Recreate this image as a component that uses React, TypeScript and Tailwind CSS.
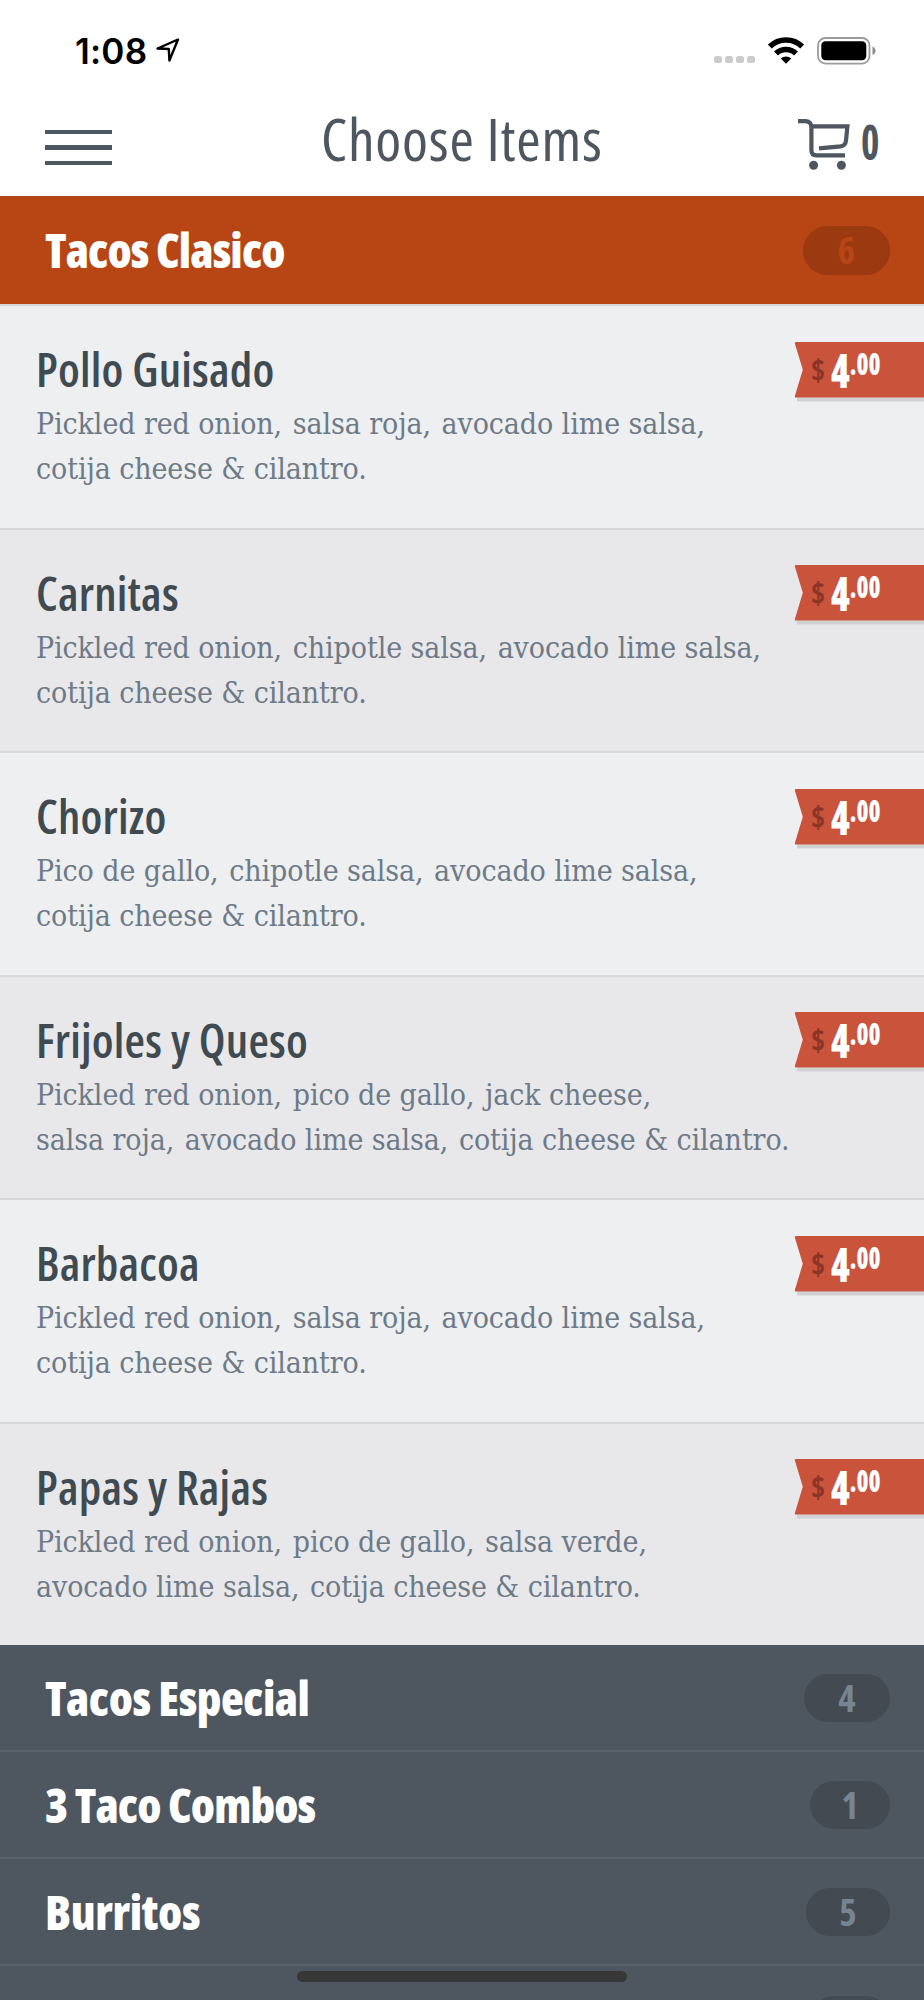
import { Fragment, ReactNode } from 'react'

interface MenuItem {
  name: string
  lines: string[]
}

const items: MenuItem[] = [
  { name: 'Pollo Guisado', lines: ['Pickled red onion, salsa roja, avocado lime salsa,', 'cotija cheese & cilantro.'] },
  { name: 'Carnitas', lines: ['Pickled red onion, chipotle salsa, avocado lime salsa,', 'cotija cheese & cilantro.'] },
  { name: 'Chorizo', lines: ['Pico de gallo, chipotle salsa, avocado lime salsa,', 'cotija cheese & cilantro.'] },
  {
    name: 'Frijoles y Queso',
    lines: ['Pickled red onion, pico de gallo, jack cheese,', 'salsa roja, avocado lime salsa, cotija cheese & cilantro.'],
  },
  { name: 'Barbacoa', lines: ['Pickled red onion, salsa roja, avocado lime salsa,', 'cotija cheese & cilantro.'] },
  { name: 'Papas y Rajas', lines: ['Pickled red onion, pico de gallo, salsa verde,', 'avocado lime salsa, cotija cheese & cilantro.'] },
]

const sections = [
  { name: 'Tacos Especial', count: 4, badge: 'w-[86px]', tracking: 'tracking-[-0.5px]' },
  { name: '3 Taco Combos', count: 1, badge: 'w-[80px]', tracking: 'tracking-[-0.9px]' },
  { name: 'Burritos', count: 5, badge: 'w-[84px]', tracking: 'tracking-[-0.4px]' },
]

function StatusBar() {
  return (
    <div className="flex h-[100px] items-center pl-[75px] pr-[47px] pt-px">
      <span className="font-['Inter',sans-serif] text-[35px] leading-[40px] font-semibold tracking-[0.2px] text-black">1:08</span>
      <svg className="ml-[9px]" width="24" height="25" viewBox="0 0 24 25" fill="none" stroke="#000" strokeWidth="2.4" strokeLinejoin="round">
        <path d="M22 1.5 1.5 10.5l11.3.5.6 11.5z" />
      </svg>
      <div className="ml-auto flex items-center">
        <div className="mt-[18px] flex gap-[3.5px]">
          {[0, 1, 2, 3].map((n) => (
            <span key={n} className="size-[7.6px] rounded-[2.5px] bg-[#cbcbcb]" />
          ))}
        </div>
        <svg className="ml-[12px]" width="38" height="28" viewBox="0 0 38 28" fill="none" stroke="#000" strokeWidth="5.6">
          <path d="M2.8 9.6a23 23 0 0 1 32.4 0M9 16.6a14.3 14.3 0 0 1 20 0" />
          <path d="M13.8 21.6a7.6 7.6 0 0 1 10.4 0L19 26.8z" fill="#000" stroke="none" />
        </svg>
        <svg className="mr-px ml-[12px]" width="59" height="28" viewBox="0 0 59 28">
          <rect x="1" y="1" width="51.5" height="25.6" rx="7.5" fill="none" stroke="#9b9b9b" strokeWidth="1.8" />
          <rect x="4.3" y="4.3" width="45" height="19" rx="4.2" fill="#000" />
          <path d="M55.5 9.5q3 1.3 3 4.3t-3 4.3z" fill="#8d8d8d" />
        </svg>
      </div>
    </div>
  )
}

function CartIcon() {
  return (
    <svg width="54" height="54" viewBox="0 0 54 54" fill="none" stroke="#4e5760" strokeWidth="4.2">
      <path d="M0 4.1h7.2q6.2 0 6.2 6.2v23q0 5 5 5H47" />
      <path d="M13.4 9.3h36L48 23.6q-.5 5-5.4 5.8L21 31.4" />
      <circle cx="15.6" cy="48.2" r="4.5" fill="#4e5760" stroke="none" />
      <circle cx="43.4" cy="48.2" r="4.5" fill="#4e5760" stroke="none" />
    </svg>
  )
}

function NavBar() {
  return (
    <div className="flex h-[96px] items-start pl-[45px] pr-[46px] text-[#4e5760]">
      <div className="mt-[29.5px] flex w-[67px] flex-col gap-[11.3px]">
        <span className="h-[4.4px] bg-[#4e5760]" />
        <span className="h-[4.4px] bg-[#4e5760]" />
        <span className="h-[4.4px] bg-[#4e5760]" />
      </div>
      <div className="ml-[209px] mt-[3px] w-[350px] whitespace-nowrap text-[59px] leading-[70px] font-[380] tracking-[0.8px] font-stretch-[78%]">
        Choose Items
      </div>
      <div className="ml-auto mt-[17px] flex">
        <CartIcon />
        <span className="ml-[9px] inline-block w-[17px] origin-left scale-x-[0.8] text-[49px] leading-[48px] font-bold font-stretch-75%">0</span>
      </div>
    </div>
  )
}

function SectionRow({ name, tracking, children }: { name: string; tracking: string; children: ReactNode }) {
  return (
    <>
      <span className={`whitespace-nowrap pl-[45px] text-[47px] leading-[60px] font-extrabold text-white font-stretch-75% ${tracking}`}>
        {name}
      </span>
      {children}
    </>
  )
}

function PriceTag() {
  return (
    <div className="relative flex h-[56px] w-[129px] shrink-0 items-start">
      <svg className="absolute inset-0 overflow-visible" width="129" height="60" viewBox="0 0 129 60">
        <path d="M2 55.5h127v4H2z" fill="#d0d1d3" />
        <path d="M1.2 0H129v55.5H1.2Q-.8 55.5 0 53.5L7.8 27.8 0 2Q-.8 0 1.2 0z" fill="#c9533b" />
      </svg>
      <span className="relative ml-[16px] mt-[8px] text-[30px] leading-[40px] font-bold text-[#8a3527] font-stretch-75%">$</span>
      <div className="relative ml-[6px] flex origin-left scale-x-[0.81] font-extrabold text-white font-stretch-75%">
        <span className="mt-[3px] text-[47px] leading-[50px]">4</span>
        <span className="mt-[2px] text-[30px] leading-[40px]">.00</span>
      </div>
    </div>
  )
}

// widens the gap that follows each comma
function Description({ text }: { text: string }) {
  const parts = text.split(', ')
  return (
    <p className="whitespace-nowrap">
      {parts.map((part, i) => (
        <Fragment key={i}>
          {part}
          {i < parts.length - 1 && <span className="mr-[2.2px]">, </span>}
        </Fragment>
      ))}
    </p>
  )
}

function ItemRow({ item, odd }: { item: MenuItem; odd: boolean }) {
  return (
    <div className={`flex h-[223.5px] border-t-2 border-[#d7d8da] ${odd ? 'bg-[#e8e8ea]' : 'bg-[#eeeff1]'}`}>
      <div className="w-[795px] pl-[36px] pt-[33px]">
        <h3 className="whitespace-nowrap text-[47px] leading-[60px] font-semibold tracking-[0.2px] text-[#404a51] font-stretch-75%">
          {item.name}
        </h3>
        <div className="mt-[2px] font-['DejaVu_Serif_Condensed','DejaVu_Serif',serif] text-[30px] leading-[45.3px] tracking-[-0.1px] text-[#6d7a87] font-stretch-75%">
          {item.lines.map((line) => (
            <Description key={line} text={line} />
          ))}
        </div>
      </div>
      <div className="pt-[35.5px]">
        <PriceTag />
      </div>
    </div>
  )
}

export default function App() {
  return (
    <div className="relative h-[2000px] w-[924px] overflow-hidden bg-[#4e565f] font-['Open_Sans',sans-serif]">
      <header className="bg-white">
        <StatusBar />
        <NavBar />
      </header>
      <div className="flex h-[108px] items-center justify-between border-t border-[#a34a20] bg-[#b84614] pb-px pr-[34px]">
        <SectionRow name="Tacos Clasico" tracking="tracking-[-0.9px]">
          <span className="flex h-[49px] w-[87px] items-center justify-center rounded-full bg-[#9b3911] text-[37px] font-bold text-[#b84614] font-stretch-75%">
            6
          </span>
        </SectionRow>
      </div>
      {items.map((item, i) => (
        <ItemRow key={item.name} item={item} odd={i % 2 === 1} />
      ))}
      {sections.map((s) => (
        <div key={s.name} className="flex h-[107px] items-center justify-between border-b-2 border-[#59626c] pr-[34px] pt-px">
          <SectionRow name={s.name} tracking={s.tracking}>
            <span
              className={`flex h-[48px] items-center justify-center rounded-full bg-[#434a52] text-[37px] font-bold text-[#778592] font-stretch-75% ${s.badge}`}
            >
              {s.count}
            </span>
          </SectionRow>
        </div>
      ))}
      <div className="flex justify-end pr-[34px] pt-[30px]">
        <span className="h-[48px] w-[80px] rounded-full bg-[#434a52]" />
      </div>
      <div className="absolute top-[1971px] left-[297px] h-[11px] w-[330px] rounded-full bg-[#373737]" />
    </div>
  )
}
